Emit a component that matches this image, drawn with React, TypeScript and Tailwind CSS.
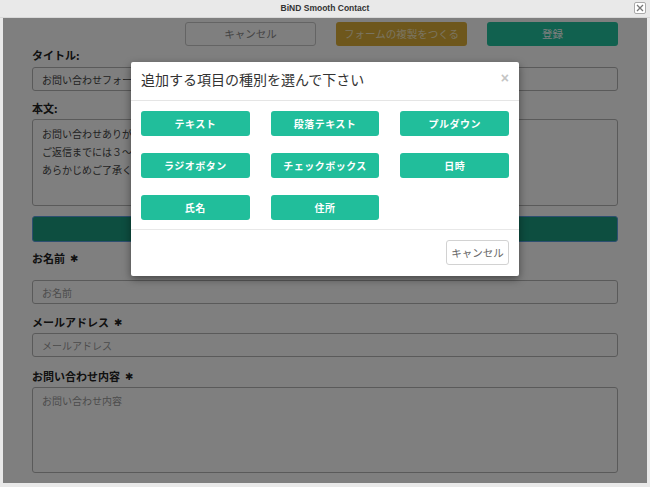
const jp = { fontFamily: '"Noto Sans CJK JP", "Liberation Sans", sans-serif' };

const fieldTypes = [
  "テキスト",
  "段落テキスト",
  "プルダウン",
  "ラジオボタン",
  "チェックボックス",
  "日時",
  "氏名",
  "住所",
];

const Label = ({ text, required, className }: { text: string; required?: boolean; className: string }) => (
  <div className={`h-[16px] flex items-center text-[11px] font-bold text-[#222] ${className}`}>
    {text}
    {required && (
      <span className="ml-[5px] text-[10px]" style={{ fontFamily: '"DejaVu Sans", sans-serif' }}>
        ✱
      </span>
    )}
  </div>
);

const Input = ({ value, placeholder, className }: { value?: string; placeholder?: string; className: string }) => (
  <div
    className={`h-[24px] border border-[#b5b5b5] rounded-[3px] bg-white flex items-center px-[9px] text-[10px] ${className} ${
      value ? "text-[#444]" : "text-[#999]"
    }`}
  >
    {value || placeholder}
  </div>
);

const AddFieldModal = () => {
  return (
    <div className="absolute left-[128px] top-[44px] w-[388px] h-[214px] bg-white rounded-[2px] shadow-[0_3px_9px_rgba(0,0,0,0.45)] flex flex-col">
      <div className="h-[39px] border-b border-[#e5e5e5] flex items-center justify-between pl-[10px] pr-[10px] pb-[3px]">
        <span className="text-[14px] text-[#333]">追加する項目の種別を選んで下さい</span>
        <span
          className="text-[14px] text-[#c4c4c4] font-bold -mt-[2px]"
          style={{ fontFamily: '"Liberation Sans", sans-serif' }}
        >
          ×
        </span>
      </div>
      <div className="grid grid-cols-3 content-start gap-x-[21px] gap-y-[17px] px-[10px] pt-[10px] h-[129px] border-b border-[#e8e8e8]">
        {fieldTypes.map((t) => (
          <button
            key={t}
            className="h-[25px] rounded-[3px] bg-[#21be9b] text-white text-[10px] font-bold tracking-[0.5px]"
          >
            {t}
          </button>
        ))}
      </div>
      <div className="flex justify-end pr-[10px] pt-[10px]">
        <button className="w-[63px] h-[25px] border border-[#d2d2d2] rounded-[3px] bg-white text-[#666] text-[10.5px]">
          キャンセル
        </button>
      </div>
    </div>
  );
};

const App = () => {
  return (
    <div className="w-[650px] h-[487px] bg-[#e9e9e9] flex flex-col overflow-hidden" style={jp}>
      <div className="h-[18px] relative flex items-center justify-center border-b border-[#d8d8d8]">
        <span
          className="text-[8.5px] font-bold text-[#333]"
          style={{ fontFamily: '"Liberation Sans", sans-serif' }}
        >
          BiND Smooth Contact
        </span>
        <div className="absolute right-[4px] top-[2px] w-[12px] h-[12px] border border-[#aaa] rounded-[2px] bg-white flex items-center justify-center">
          <svg width="8" height="8" viewBox="0 0 8 8">
            <path d="M1 1L7 7M7 1L1 7" stroke="#777" strokeWidth="1.3" />
          </svg>
        </div>
      </div>
      <div className="relative mx-[3px] h-[465px] bg-white">
        <div className="flex flex-col px-[29px]">
          <div className="flex justify-end gap-[20px] mt-[4px]">
            <button className="w-[131px] h-[24px] border border-[#c8c8c8] rounded-[3px] bg-white text-[#888] text-[10.5px]">
              キャンセル
            </button>
            <button className="w-[131px] h-[24px] rounded-[3px] bg-[#dcae38] text-[#f6e8c0] text-[10.5px]">
              フォームの複製をつくる
            </button>
            <button className="w-[131px] h-[24px] rounded-[3px] bg-[#22c29e] text-white text-[10.5px]">
              登録
            </button>
          </div>
          <Label text="タイトル:" className="mt-[1px]" />
          <Input value="お問い合わせフォーム" className="mt-[4px]" />
          <Label text="本文:" className="mt-[9px]" />
          <div className="mt-[3px] h-[87px] border border-[#b5b5b5] rounded-[3px] bg-white px-[9px] pt-[5px] text-[10px] leading-[18px] text-[#444]">
            <div>お問い合わせありがとうございます。</div>
            <div>ご返信までには３～４営業日ほどお時間をいただいております。</div>
            <div>あらかじめご了承ください。</div>
          </div>
          <div className="mt-[10px] h-[26px] rounded-[3px] bg-[#1a9c80] border border-[#5a9ee0]" />
          <Label text="お名前" required className="mt-[8px]" />
          <Input placeholder="お名前" className="mt-[14px]" />
          <Label text="メールアドレス" required className="mt-[10px]" />
          <Input placeholder="メールアドレス" className="mt-[3px]" />
          <Label text="お問い合わせ内容" required className="mt-[11px]" />
          <div className="mt-[3px] h-[86px] border border-[#b5b5b5] rounded-[3px] bg-white px-[9px] pt-[5px] text-[10px] text-[#999]">
            お問い合わせ内容
          </div>
        </div>
        <div className="absolute inset-0 bg-black/50" />
        <AddFieldModal />
      </div>
    </div>
  );
};

export default App;
